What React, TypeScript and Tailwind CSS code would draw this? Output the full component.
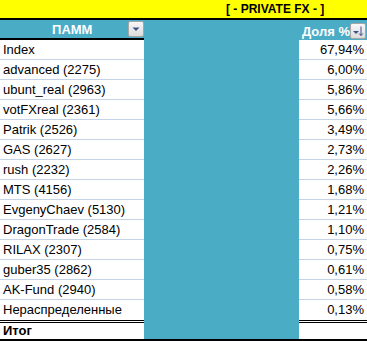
import React from 'react';

const rows = [
  { name: 'Index', share: '67,94%' },
  { name: 'advanced (2275)', share: '6,00%' },
  { name: 'ubunt_real (2963)', share: '5,86%' },
  { name: 'votFXreal (2361)', share: '5,66%' },
  { name: 'Patrik (2526)', share: '3,49%' },
  { name: 'GAS (2627)', share: '2,73%' },
  { name: 'rush (2232)', share: '2,26%' },
  { name: 'MTS (4156)', share: '1,68%' },
  { name: 'EvgenyChaev (5130)', share: '1,21%' },
  { name: 'DragonTrade (2584)', share: '1,10%' },
  { name: 'RILAX (2307)', share: '0,75%' },
  { name: 'guber35 (2862)', share: '0,61%' },
  { name: 'AK-Fund (2940)', share: '0,58%' },
  { name: 'Нераспределенные', share: '0,13%' },
];

function FilterButton({ sort }: { sort?: boolean }) {
  return (
    <div className="w-[16px] h-[16px] shrink-0 border border-[#a6a6a6] rounded-[2px] bg-gradient-to-b from-[#f7f7f7] to-[#dcdcdc] flex items-center justify-center">
      {sort ? (
        <svg width="12" height="12" viewBox="0 0 12 12">
          <path d="M1 6 L4 9 L7 6 Z" fill="#3c4f8c" />
          <rect x="8.5" y="1.5" width="1" height="9" fill="#3c4f8c" />
          <path d="M7.2 8.5 L9 10.5 L10.8 8.5" stroke="#3c4f8c" strokeWidth="1" fill="none" />
        </svg>
      ) : (
        <svg width="10" height="10" viewBox="0 0 10 10">
          <path d="M1.5 3.5 L8.5 3.5 L5 7 Z" fill="#3c4f8c" />
        </svg>
      )}
    </div>
  );
}

export default function App() {
  return (
    <div className="w-[367px] h-[341px] bg-white text-[13px] text-black font-['Liberation_Sans',Arial,sans-serif] overflow-hidden">
      <div className="h-[20px] bg-[#ffff00] border-b-2 border-black flex items-center pl-[226px]">
        <span className="text-[12px] font-bold leading-none whitespace-nowrap">[ - PRIVATE FX - ]</span>
      </div>
      <div className="flex border-b-2 border-black">
        <div className="w-[145px]">
          <div className="h-[20px] bg-[#4bacc6] border-b-2 border-black relative flex items-center justify-center">
            <span className="font-bold text-white leading-none">ПАММ</span>
            <div className="absolute right-0 top-[1px]">
              <FilterButton />
            </div>
          </div>
          {rows.map((r, i) => (
            <div
              key={i}
              className={`h-[20px] pl-[3px] flex items-center whitespace-nowrap ${
                i < rows.length - 1 ? 'border-b border-[#c5d3e6]' : ''
              }`}
            >
              {r.name}
            </div>
          ))}
          <div className="h-[19px] border-t-[3px] border-double border-black pl-[3px] flex items-center font-bold">
            Итог
          </div>
        </div>
        <div className="w-[155px] bg-[#4bacc6]" />
        <div className="flex-1">
          <div className="h-[20px] bg-[#4bacc6] flex items-center justify-between pl-[3px] pr-[1px] pt-[2px]">
            <span className="font-bold text-white leading-none whitespace-nowrap">Доля %</span>
            <FilterButton sort />
          </div>
          {rows.map((r, i) => (
            <div
              key={i}
              className={`h-[20px] pr-[3px] flex items-center justify-end ${
                i < rows.length - 1 ? 'border-b border-[#c5d3e6]' : ''
              }`}
            >
              {r.share}
            </div>
          ))}
          <div className="h-[19px] border-t-[3px] border-double border-black" />
        </div>
      </div>
    </div>
  );
}
